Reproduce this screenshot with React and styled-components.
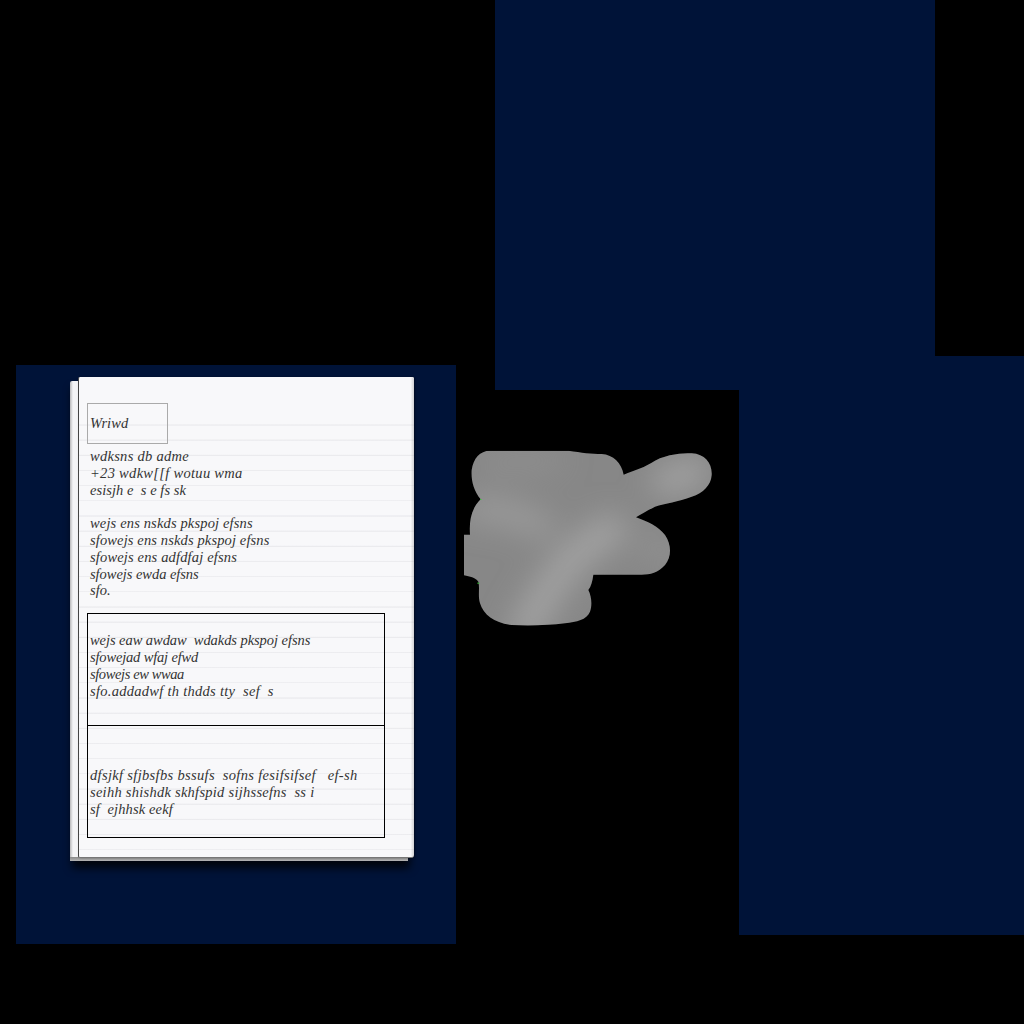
import React from 'react';
import styled, { createGlobalStyle } from 'styled-components';

const GlobalStyle = createGlobalStyle`
  html, body {
    margin: 0;
    padding: 0;
    background: #000;
  }
`

// [text, letter spacing] - the handwriting is wider on some lines than others
const introLines = [
  ['wdksns db adme', 0.28],
  ['+23 wdkw[[f wotuu wma', 0.3],
  ['esisjh e  s e fs sk', 0.05],
];
const bodyLines = [
  ['wejs ens nskds pkspoj efsns', 0.15],
  ['sfowejs ens nskds pkspoj efsns', 0.13],
  ['sfowejs ens adfdfaj efsns', 0.16],
  ['sfowejs ewda efsns', -0.05],
  ['sfo.', 0],
];
const firstBoxLines = [
  ['wejs eaw awdaw  wdakds pkspoj efsns', -0.06],
  ['sfowejad wfaj efwd', -0.17],
  ['sfowejs ew wwaa', -0.4],
  ['sfo.addadwf th thdds tty  sef  s', 0.28],
];
const secondBoxLines = [
  ['dfsjkf sfjbsfbs bssufs  sofns fesifsifsef   ef-sh', 0.33],
  ['seihh shishdk skhfspid sijhssefns  ss i', 0.26],
  ['sf  ejhhsk eekf', 0.13],
];

const BLOB_PATH = `M105 32 L340 32 C380 38 410 42 440 42 C475 44 500 70 506 104 C540 90 570 82 600 62
  C640 42 680 40 710 40 C750 42 772 70 770 105 C768 135 745 160 710 170 C670 185 630 190 600 200
  C580 210 560 222 543 232 C580 245 610 260 630 285 C650 315 650 350 630 375 C610 398 585 404 560 404
  L415 404 C412 425 408 440 400 450 C410 470 412 495 405 515 C395 540 365 545 330 550
  C280 556 220 558 170 555 C120 550 85 525 75 490 C68 465 75 445 70 425 C60 412 45 410 27 406
  L27 284 L45 284 C42 240 50 205 77 178 C55 150 48 120 50 90 C55 55 75 32 105 32 Z`;

const Lines = ({ items }) => items.map(([text, track], i) => (
  <TextLine key={i} $track={track}>{text}</TextLine>
));

const Blob = () => (
  <BlobSvg viewBox="0 0 810 600">
    <defs>
      <clipPath id="blob-clip"><path d={BLOB_PATH} /></clipPath>
      <filter id="blob-blur" x="-30%" y="-30%" width="160%" height="160%">
        <feGaussianBlur stdDeviation="45" />
      </filter>
    </defs>
    <g clipPath="url(#blob-clip)">
      <rect width="810" height="600" fill="#878787" />
      <g filter="url(#blob-blur)" fill="none" strokeLinecap="round">
        <path d="M210 570 C260 480 330 340 470 270" strokeWidth="90" stroke="#a3a3a3" />
        <path d="M60 210 C110 205 170 215 260 260" strokeWidth="70" stroke="#9c9c9c" />
        <path d="M630 125 L720 95" strokeWidth="80" stroke="#a4a4a4" />
        <path d="M100 70 L300 60" strokeWidth="40" stroke="#939393" />
        <path d="M580 320 L650 340" strokeWidth="60" stroke="#939393" />
      </g>
    </g>
    <Speck x="75" y="177" width="4" height="3" />
    <Speck x="67" y="428" width="6" height="3" />
  </BlobSvg>
);

const App = () => (
  <>
    <GlobalStyle />
    <Canvas>
      <Page $x={495} $y={-189} />
      <Page $x={739} $y={356} />
      <Page $x={16} $y={365}>
        <SheetStack>
          <BackSheet />
          <Paper>
            <TitleBox><TextLine $track={0.1}>Wriwd</TextLine></TitleBox>
            <TextBlock><Lines items={introLines} /></TextBlock>
            <TextBlock $gap><Lines items={bodyLines} /></TextBlock>
            <Table>
              <Cell $pad={18}><Lines items={firstBoxLines} /></Cell>
              <Cell $pad={41}><Lines items={secondBoxLines} /></Cell>
            </Table>
          </Paper>
        </SheetStack>
      </Page>
      <Blob />
    </Canvas>
  </>
);

const Canvas = styled.div`
  position: relative;
  width: 1024px;
  height: 1024px;
  overflow: hidden;
  background: #000;
`
const Page = styled.div`
  position: absolute;
  left: ${p => p.$x}px;
  top: ${p => p.$y}px;
  box-sizing: border-box;
  padding: 12px 0 0 62px;
  width: 440px;
  height: 579px;
  background: #001338;
`
const SheetStack = styled.div`
  position: relative;
  width: 336px;
`
const BackSheet = styled.div`
  position: absolute;
  top: 4px;
  left: -8px;
  width: 338px;
  height: 480px;
  border-radius: 2px;
  background: linear-gradient(90deg, #b8b8ba, #f4f4f6 3px, #eeeef0);
  box-shadow: 2px 7px 9px rgba(0, 0, 0, 0.8);
  &:after {
    content: "";
    position: absolute;
    left: 0;
    right: 0;
    bottom: 0;
    height: 4px;
    background: linear-gradient(180deg, #8a8a8a, #b4b4b4);
  }
`
const Paper = styled.div`
  position: relative;
  box-sizing: border-box;
  padding: 26px 0 0 8px;
  height: 481px;
  border-left: 1px solid #444;
  border-bottom: 1px solid #777;
  border-radius: 2px 2px 3px 2px;
  background-color: #f8f8fa;
  background-image:
    linear-gradient(90deg, transparent 99%, rgba(120, 120, 125, 0.3)),
    linear-gradient(180deg, #f8f8fa 0, #f8f8fa 42px, transparent 46px),
    repeating-linear-gradient(
      180deg,
      transparent 0,
      transparent 13.6px,
      #efeff2 14.2px,
      #ebebee 14.8px,
      #efeff2 15.17px
    );
  background-position: 0 0, 0 0, 0 3px;
  box-shadow: 1px 0 2px rgba(0, 0, 0, 0.3);
`
const TitleBox = styled.div`
  display: flex;
  align-items: center;
  box-sizing: border-box;
  padding-left: 2px;
  width: 81px;
  height: 41px;
  border: 1px solid #aaa;
`
const TextLine = styled.div`
  height: 16.8px;
  line-height: 16.2px;
  font-family: "Liberation Serif", cursive;
  font-size: 14.5px;
  font-style: italic;
  letter-spacing: ${p => p.$track}px;
  color: #333;
  white-space: pre;
`
const TextBlock = styled.div`
  margin-top: ${p => p.$gap ? 16.8 : 4}px;
  padding-left: 3px;
`
const Table = styled.div`
  display: grid;
  grid-template-rows: 111px 113px;
  box-sizing: border-box;
  margin-top: 14px;
  width: 298px;
  height: 225px;
  border: 1px solid #000;
`
const Cell = styled.div`
  box-sizing: border-box;
  padding: ${p => p.$pad}px 0 0 2px;
  & + & {
    border-top: 1px solid #000;
  }
`
const BlobSvg = styled.svg`
  position: absolute;
  left: 455px;
  top: 440px;
  width: 270px;
  height: 200px;
`
const Speck = styled.rect`
  fill: #35c435;
`

export default App;
